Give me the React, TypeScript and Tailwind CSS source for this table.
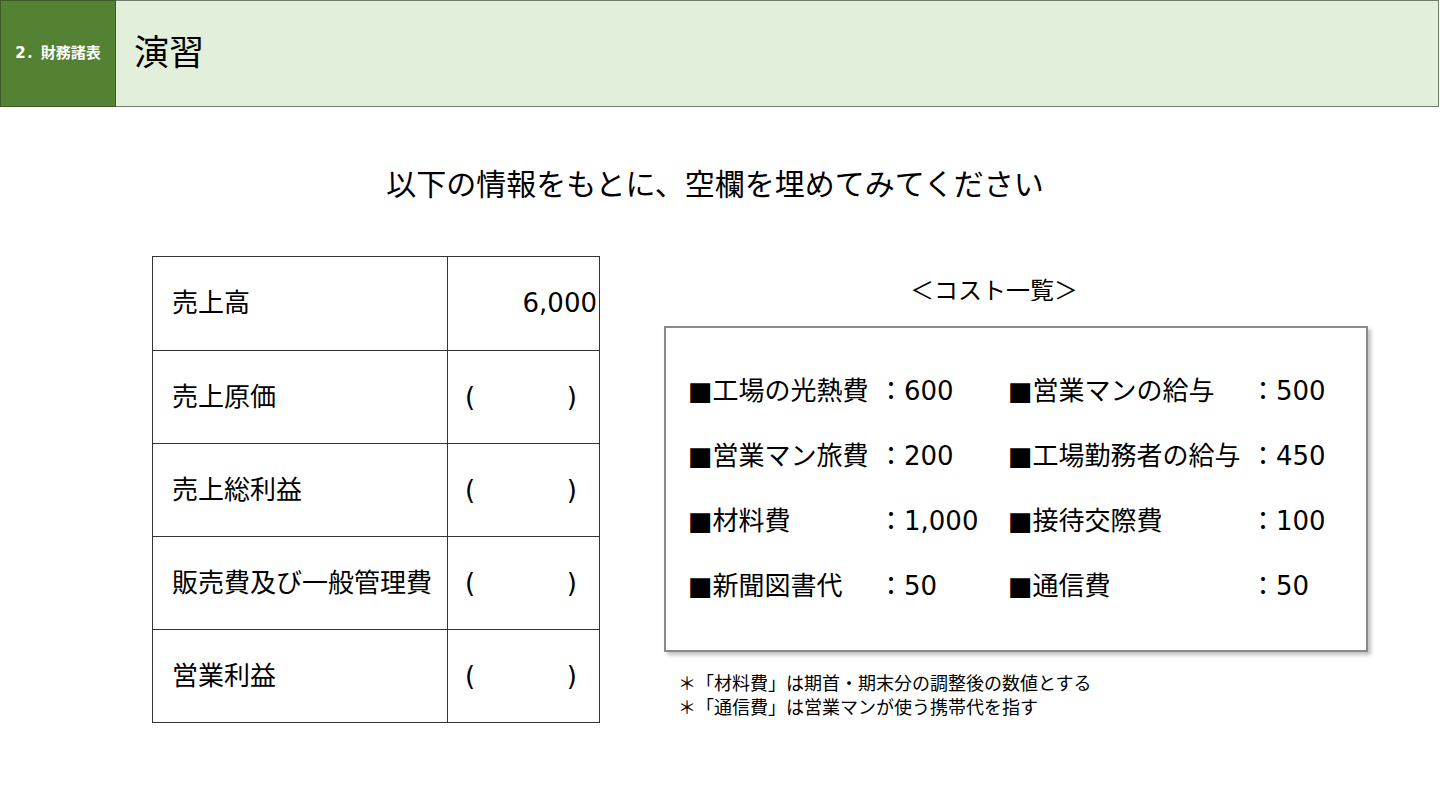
import React from 'react';

const font = { fontFamily: '"DejaVu Sans", "Noto Sans CJK JP", sans-serif' };

const ROWS: { label: string; value?: string }[] = [
  { label: '売上高', value: '6,000' },
  { label: '売上原価' },
  { label: '売上総利益' },
  { label: '販売費及び一般管理費' },
  { label: '営業利益' },
];

const COSTS: [string, string, string, string][] = [
  ['工場の光熱費', '600', '営業マンの給与', '500'],
  ['営業マン旅費', '200', '工場勤務者の給与', '450'],
  ['材料費', '1,000', '接待交際費', '100'],
  ['新聞図書代', '50', '通信費', '50'],
];

export default function App() {
  return (
    <div className="w-[1440px] h-[810px] bg-white text-black overflow-hidden" style={font}>
      {/* Header */}
      <div className="flex h-[107px]">
        <div className="w-[116px] h-full bg-[#548235] border border-[#3d5a27] flex items-center justify-center text-white text-[15px] font-bold">
          2．財務諸表
        </div>
        <div className="w-[1323px] h-full bg-[#e2efda] border border-l-0 border-[#6f7d6a] flex items-center pl-[18px] text-[35px] leading-none">
          演習
        </div>
      </div>

      <h1 className="mt-[58px] text-center text-[30px] leading-[40px] pr-[10px]">
        以下の情報をもとに、空欄を埋めてみてください
      </h1>

      <div className="flex mt-[51px]">
        {/* P/L table */}
        <div className="ml-[152px] w-[448px] border border-[#333] flex flex-col self-start">
          {ROWS.map((r, i) => (
            <div key={r.label} className={`flex h-[93px] ${i > 0 ? 'border-t border-[#333]' : ''}`}>
              <div className="w-[295px] border-r border-[#333] flex items-center pl-[19px] text-[26px] whitespace-nowrap">{r.label}</div>
              <div className="flex-1 flex items-center text-[26px]">
                {r.value ? (
                  <span className="ml-auto pr-[2px]">{r.value}</span>
                ) : (
                  <div className="flex justify-between w-full pl-[17px] pr-[22px]">
                    <span>(</span>
                    <span>)</span>
                  </div>
                )}
              </div>
            </div>
          ))}
        </div>

        {/* Cost list */}
        <div className="ml-[64px] flex flex-col">
          <div className="text-center text-[24px] leading-[32px] mt-[19px] pr-[44px]">＜コスト一覧＞</div>
          <div className="mt-[19px] w-[704px] h-[326px] border-2 border-[#8a8a8a] shadow-[3px_3px_4px_rgba(0,0,0,0.25)] pt-[45px] pl-[22px]">
            {COSTS.map((c) => (
              <div key={c[0]} className="flex h-[65px] text-[26px] leading-[36px]">
                <span className="w-[190px] whitespace-nowrap">■{c[0]}</span>
                <span className="w-[130px] whitespace-nowrap">：{c[1]}</span>
                <span className="w-[242px] whitespace-nowrap">■{c[2]}</span>
                <span className="whitespace-nowrap">：{c[3]}</span>
              </div>
            ))}
          </div>
          <div className="mt-[20px] pl-[14px] text-[18px] leading-[24px]">
            <div>＊「材料費」は期首・期末分の調整後の数値とする</div>
            <div>＊「通信費」は営業マンが使う携帯代を指す</div>
          </div>
        </div>
      </div>
    </div>
  );
}
